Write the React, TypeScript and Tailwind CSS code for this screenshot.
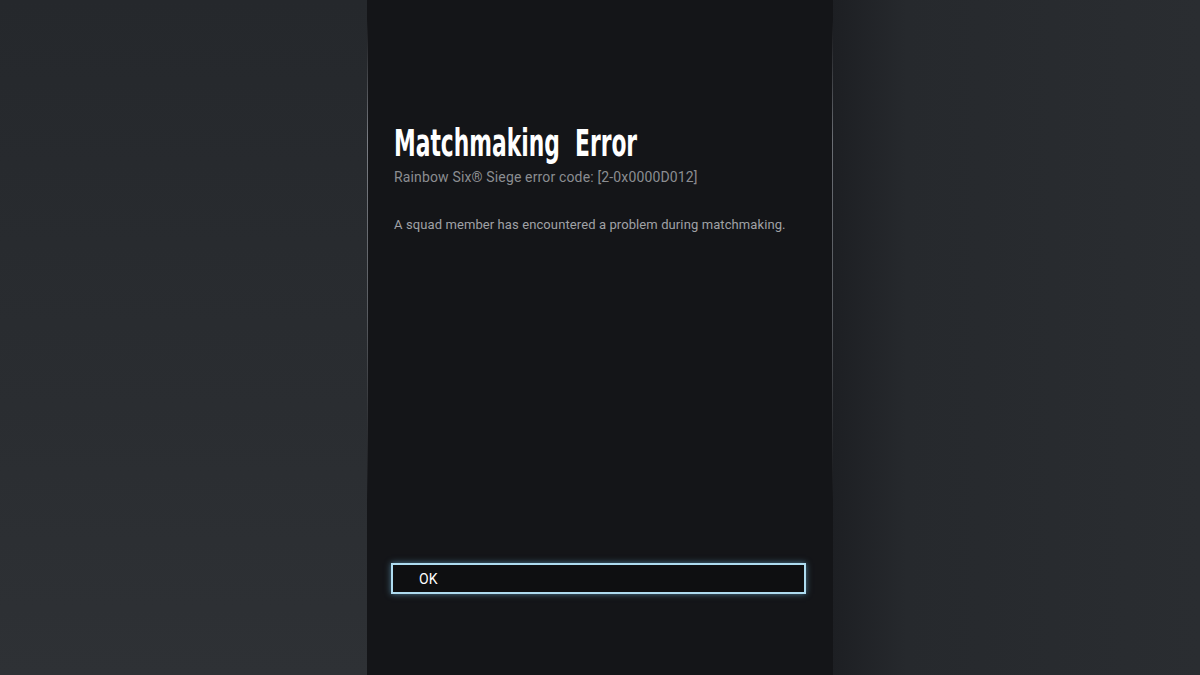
export default function App() {
  return (
    <div className="w-[1200px] h-[675px] flex overflow-hidden" style={{ fontFamily: '"Roboto", "Liberation Sans", sans-serif' }}>
      <div className="w-[367px] h-full bg-[linear-gradient(180deg,#25282c_0%,#2a2d31_60%,#2e3135_100%)]" />
      {/* dialog column */}
      <div className="relative w-[466px] h-full bg-[#141518] flex flex-col">
        <div className="absolute left-0 top-[20px] w-px h-[480px] bg-[linear-gradient(180deg,transparent,#7a7d83_25%,#5a5d62_60%,transparent)]" />
        <div className="absolute right-0 top-[20px] w-px h-[480px] bg-[linear-gradient(180deg,transparent,#6b6e74_25%,#55585d_60%,transparent)]" />
        <div className="pl-[27px] pt-[122px]">
          <h1 className="text-white font-bold text-[37px] leading-[44px] origin-left scale-x-[0.655] whitespace-nowrap" style={{ fontFamily: '"DejaVu Sans Condensed", "Roboto", sans-serif' }}>
            Matchmaking&nbsp; Error
          </h1>
          <p className="mt-[2px] text-[14px] leading-[18px] text-[#8b8d91] tracking-[0.15px]">
            Rainbow Six® Siege error code: [2-0x0000D012]
          </p>
          <p className="mt-[30px] text-[13px] leading-[18px] text-[#a0a2a6] tracking-[0.1px]">
            A squad member has encountered a problem during matchmaking.
          </p>
        </div>
        <div className="flex-1" />
        <div className="pl-[24px] pb-[81px]">
          <button className="w-[415px] h-[31px] bg-[#0e0f11] border-2 border-[#aedcf0] shadow-[0_0_6px_rgba(120,200,240,0.55)] text-left pl-[26px] text-white text-[14px] leading-none">
            OK
          </button>
        </div>
      </div>
      <div className="flex-1 h-full bg-[linear-gradient(90deg,#1d1f23_0%,#26292d_20%,#2a2d31_100%)]" />
    </div>
  );
}
